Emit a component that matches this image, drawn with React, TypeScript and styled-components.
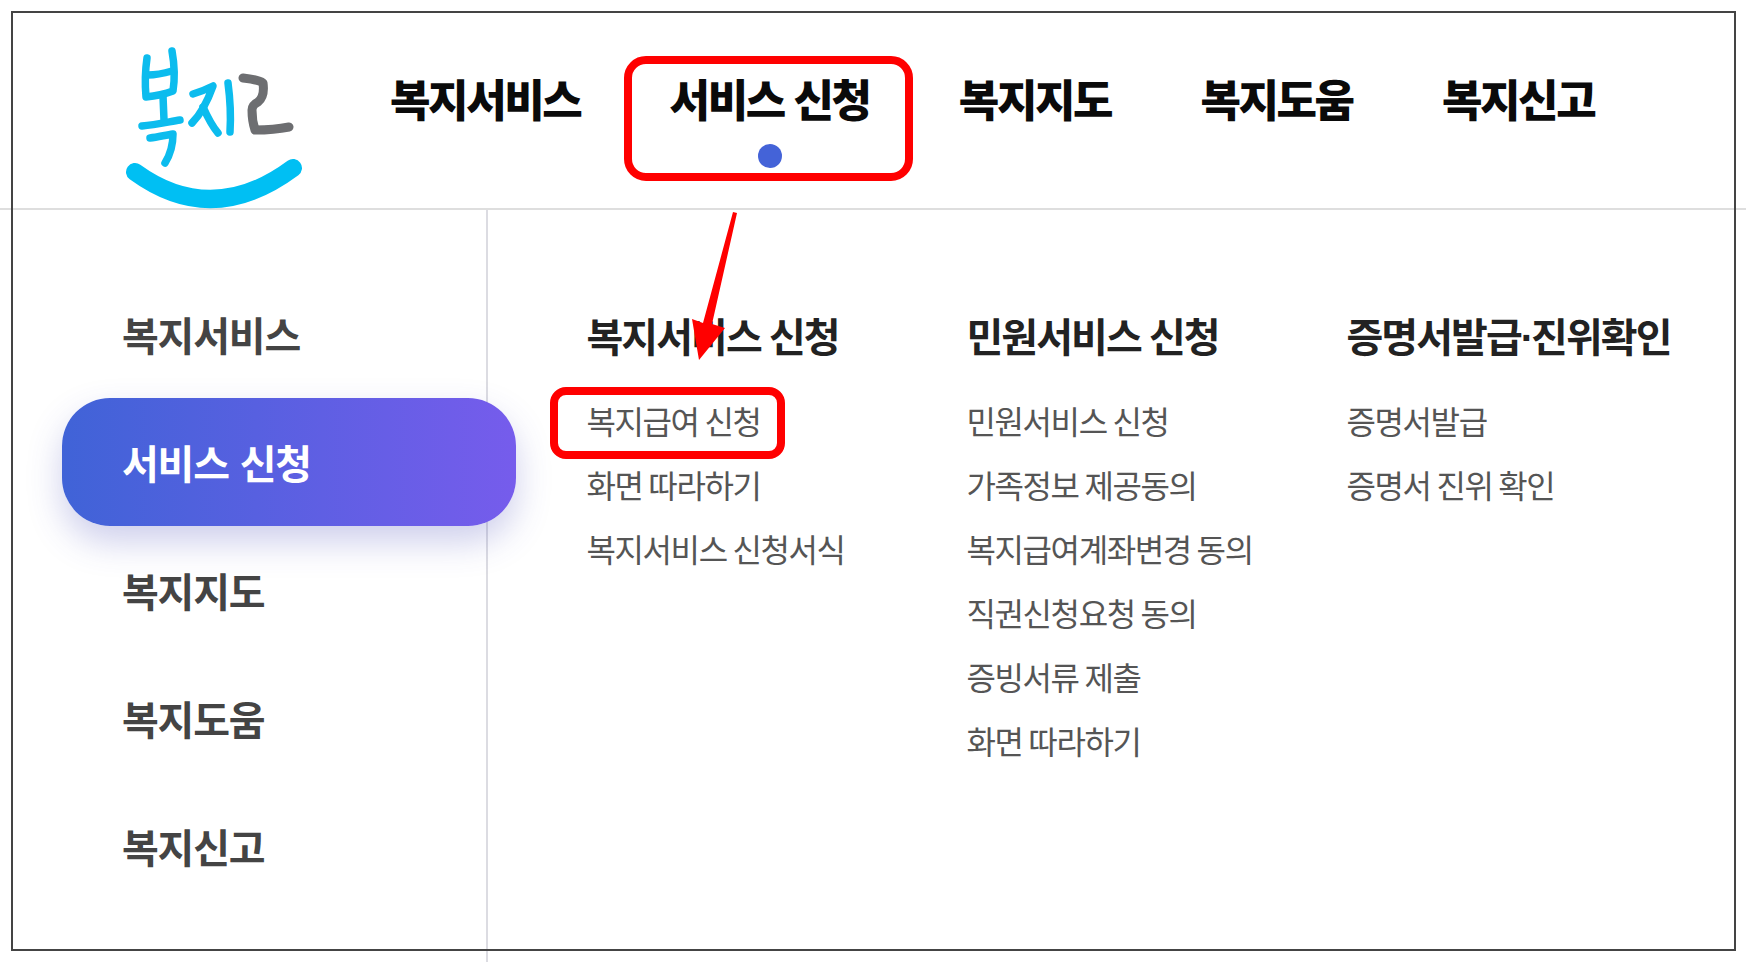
import React, { FC } from 'react'
import styled, { createGlobalStyle } from 'styled-components'

const GlobalStyle = createGlobalStyle`
    html, body {
        margin: 0;
        padding: 0;
        background: #fff;
    }
    body {
        font-family: "Noto Sans CJK KR", "Noto Sans", sans-serif;
    }
`

const Page = styled.div`
    position: relative;
    width: 1746px;
    height: 962px;
    overflow: hidden;
    background: #fff;
`

const Header = styled.header`
    display: flex;
    align-items: flex-start;
    box-sizing: border-box;
    height: 210px;
    padding: 45px 0 0 120px;
    border-bottom: 2px solid #dedede;
`

const LogoMark = styled.svg`
    flex: none;
    width: 190px;
    height: 165px;
`

const Nav = styled.nav`
    display: flex;
    gap: 89.2px;
    margin: 25px 0 0 80px;
`

const NavItem = styled.div`
    display: flex;
    flex-direction: column;
    align-items: center;
    gap: 18px;
`

const NavLabel = styled.span`
    font-size: 44px;
    font-weight: 900;
    line-height: 56px;
    letter-spacing: -2.4px;
    word-spacing: 2px;
    white-space: nowrap;
    color: #0a0a0a;
`

const NavDot = styled.i`
    display: block;
    width: 24px;
    height: 24px;
    border-radius: 50%;
    background: #4463d8;
`

const Body = styled.div`
    display: flex;
    height: 752px;
`

const Sidebar = styled.aside`
    flex: none;
    box-sizing: border-box;
    width: 488px;
    padding: 60px 0 0 62px;
    border-right: 2px solid #dcdce2;
`

const SideItem = styled.div<{ $active?: boolean }>`
    position: relative;
    box-sizing: border-box;
    width: 454px;
    height: 128px;
    padding-left: 60px;
    border-radius: 48px;
    font-size: 40px;
    font-weight: 700;
    line-height: 128px;
    letter-spacing: -1.2px;
    word-spacing: 3px;
    color: ${(p) => (p.$active ? '#fff' : '#444')};
    background: ${(p) =>
        p.$active ? 'linear-gradient(90deg, #4063d7, #765cec)' : 'transparent'};
    box-shadow: ${(p) =>
        p.$active ? '0 16px 34px rgba(64, 70, 180, 0.26)' : 'none'};
`

const Columns = styled.div`
    display: flex;
    padding: 93px 0 0 98.5px;
`

const Column = styled.section`
    width: 380px;
`

const ColumnTitle = styled.h3`
    margin: 0 0 21px;
    font-size: 40px;
    font-weight: 700;
    line-height: 64px;
    letter-spacing: -1.95px;
    word-spacing: 1px;
    white-space: nowrap;
    color: #222;
`

const TitleDot = styled.span`
    font-family: "Liberation Sans", sans-serif;
    font-weight: 700;
    line-height: 0;
    letter-spacing: -3px;
`

const LinkList = styled.ul`
    margin: 0;
    padding: 0;
    list-style: none;
`

const LinkItem = styled.li`
    font-size: 32px;
    font-weight: 400;
    line-height: 64px;
    letter-spacing: -1.4px;
    white-space: nowrap;
    color: #555;
`

// the screenshot's annotations, drawn on top of the page
const Frame = styled.div`
    position: absolute;
    left: 11px;
    top: 11px;
    width: 1725px;
    height: 940px;
    box-sizing: border-box;
    border: 2px solid #444;
    pointer-events: none;
`

const Callout = styled.div<{ $x: number; $y: number; $w: number; $h: number; $r: number }>`
    position: absolute;
    left: ${(p) => p.$x}px;
    top: ${(p) => p.$y}px;
    width: ${(p) => p.$w}px;
    height: ${(p) => p.$h}px;
    box-sizing: border-box;
    border: 8px solid #f00;
    border-radius: ${(p) => p.$r}px;
`

const Arrow = styled.svg`
    position: absolute;
    left: 680px;
    top: 205px;
    width: 70px;
    height: 165px;
`

const sideItems = ['복지서비스', '서비스 신청', '복지지도', '복지도움', '복지신고']

const navItems = ['복지서비스', '서비스 신청', '복지지도', '복지도움', '복지신고']

const columns = [
    {
        title: <>복지서비스 신청</>,
        links: ['복지급여 신청', '화면 따라하기', '복지서비스 신청서식'],
    },
    {
        title: <>민원서비스 신청</>,
        links: [
            '민원서비스 신청',
            '가족정보 제공동의',
            '복지급여계좌변경 동의',
            '직권신청요청 동의',
            '증빙서류 제출',
            '화면 따라하기',
        ],
    },
    {
        title: (
            <>
                증명서발급<TitleDot>·</TitleDot>진위확인
            </>
        ),
        links: ['증명서발급', '증명서 진위 확인'],
    },
]

const Logo: FC = () => (
    <LogoMark viewBox="120 45 190 165" fill="none" strokeLinecap="round" strokeLinejoin="round">
        <g stroke="#0cbcee" strokeWidth="7.5">
            <path d="M147 58 C145 72 145 86 146 97 C156 96 165 94 173 91 C175 78 174 62 172 51" />
            <path d="M148 75 C156 75 165 73 172 71" />
            <path d="M163 96 L164 120" />
            <path d="M142 126 C155 125 168 122 180 120" />
            <path d="M150 138 C158 137 166 135 173 134 C173 145 170 155 165 163" />
            <path d="M193 94 C200 92 207 89 213 86 C208 100 202 113 192 123" />
            <path d="M203 107 C207 116 212 126 218 133" />
            <path d="M228 83 C230 98 231 116 230 132" />
        </g>
        <path
            d="M243 78 C252 79 259 80 263 83 C264 90 263 98 258 102 C254 104 252 106 252 110 C252 117 253 124 255 130 C266 130 279 129 289 127"
            stroke="#6d6e71"
            strokeWidth="9"
        />
        <path d="M135 172 Q212 228 293 168" stroke="#00bff3" strokeWidth="18" />
    </LogoMark>
)

const App: FC = () => (
    <Page>
        <GlobalStyle />
        <Header>
            <Logo />
            <Nav>
                {navItems.map((label, i) => (
                    <NavItem key={label}>
                        <NavLabel>{label}</NavLabel>
                        {i === 1 && <NavDot />}
                    </NavItem>
                ))}
            </Nav>
        </Header>
        <Body>
            <Sidebar>
                {sideItems.map((label, i) => (
                    <SideItem key={label} $active={i === 1}>
                        {label}
                    </SideItem>
                ))}
            </Sidebar>
            <Columns>
                {columns.map((col, i) => (
                    <Column key={i}>
                        <ColumnTitle>{col.title}</ColumnTitle>
                        <LinkList>
                            {col.links.map((link) => (
                                <LinkItem key={link}>{link}</LinkItem>
                            ))}
                        </LinkList>
                    </Column>
                ))}
            </Columns>
        </Body>
        <Frame />
        <Callout $x={624} $y={56} $w={289} $h={125} $r={22} />
        <Callout $x={550} $y={387} $w={235} $h={72} $r={16} />
        <Arrow viewBox="680 205 70 165">
            <polygon
                points="733,212 737,213 712,324 725,328 699,360 692,319 703,323"
                fill="#f00"
            />
        </Arrow>
    </Page>
)

export default App
